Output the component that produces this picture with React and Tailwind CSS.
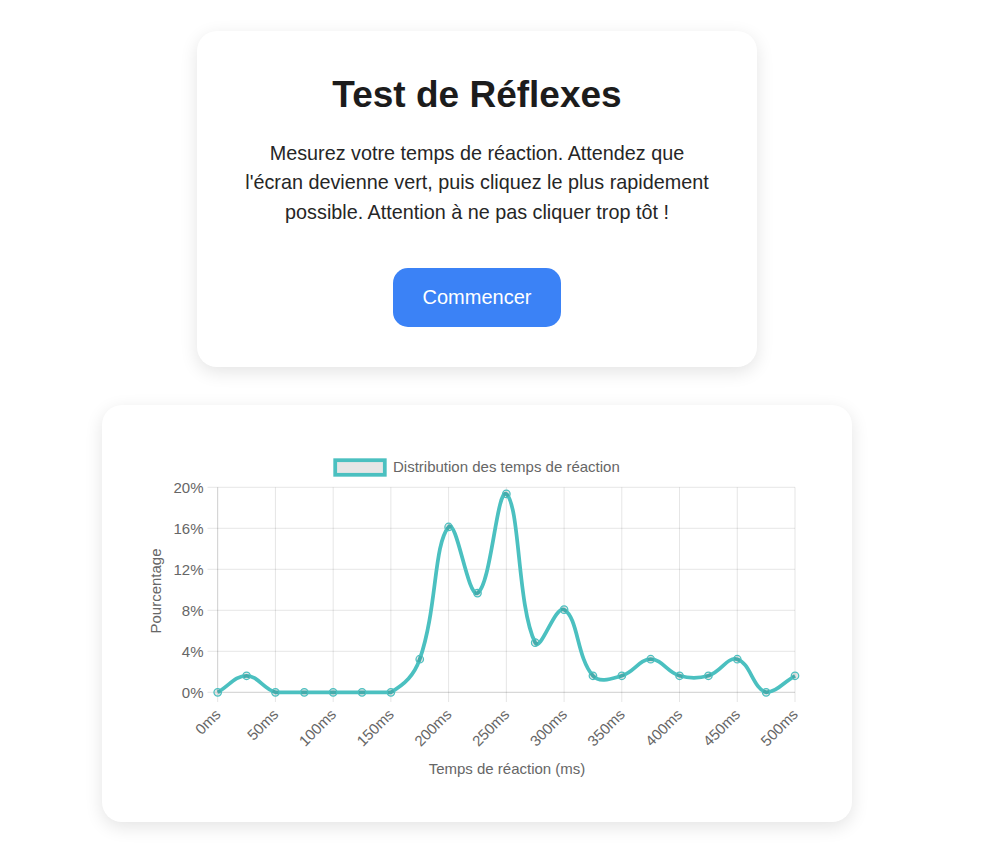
import React from 'react'

const counts = [0, 1, 0, 0, 0, 0, 0, 2, 10, 6, 12, 3, 5, 1, 1, 2, 1, 1, 2, 0, 1]
const total = 62

const area = { left: 217.7, right: 795, top: 487.3, bottom: 692.3 }
const stepX = (area.right - area.left) / 20
const pxPerPct = (area.bottom - area.top) / 20

const pts = counts.map((c, i) => ({
  x: area.left + i * stepX,
  y: area.bottom - (c / total) * 100 * pxPerPct,
}))

const clamp = (v, lo, hi) => Math.min(Math.max(v, lo), hi)

// same control points as chart.js splineCurve, tension 0.4
function buildPath(points, t) {
  const cps = points.map((cur, i) => {
    const prev = points[i - 1] || cur
    const next = points[i + 1] || cur
    const d01 = Math.hypot(cur.x - prev.x, cur.y - prev.y)
    const d12 = Math.hypot(next.x - cur.x, next.y - cur.y)
    let s01 = d01 / (d01 + d12)
    let s12 = d12 / (d01 + d12)
    s01 = isNaN(s01) ? 0 : s01
    s12 = isNaN(s12) ? 0 : s12
    const fa = t * s01
    const fb = t * s12
    const cap = (p) => ({ x: clamp(p.x, area.left, area.right), y: clamp(p.y, area.top, area.bottom) })
    return {
      a: cap({ x: cur.x - fa * (next.x - prev.x), y: cur.y - fa * (next.y - prev.y) }),
      b: cap({ x: cur.x + fb * (next.x - prev.x), y: cur.y + fb * (next.y - prev.y) }),
    }
  })
  let d = `M${points[0].x},${points[0].y}`
  for (let i = 1; i < points.length; i++) {
    const c1 = cps[i - 1].b
    const c2 = cps[i].a
    d += ` C${c1.x},${c1.y} ${c2.x},${c2.y} ${points[i].x},${points[i].y}`
  }
  return d
}

const yTicks = [0, 4, 8, 12, 16, 20]
const xLabels = Array.from({ length: 11 }, (_, i) => i * 50)

function ReactionChart() {
  const grid = 'rgba(0,0,0,0.1)'
  const font = { fontFamily: '"Liberation Sans", Arial, sans-serif', fontSize: 15, fill: '#666' }
  return (
    <svg width="700" height="367" viewBox="127 430 700 367" className="block">
      {/* legend */}
      <rect x="335.2" y="460.2" width="49.6" height="14.6" fill="#e6e6e6" stroke="#4bc0c0" strokeWidth="3.75" />
      <text x="393" y="472" {...font}>Distribution des temps de réaction</text>

      {/* horizontal grid */}
      {yTicks.map((v) => {
        const y = area.bottom - v * pxPerPct
        return (
          <g key={v}>
            <line x1="207.5" x2={area.right} y1={y} y2={y} stroke={grid} strokeWidth="1" />
            <text x="203.5" y={y} textAnchor="end" dominantBaseline="central" {...font}>{v}%</text>
          </g>
        )
      })}

      {/* vertical grid */}
      {xLabels.map((v, i) => {
        const x = area.left + i * 2 * stepX
        return (
          <g key={v}>
            <line x1={x} x2={x} y1={area.top} y2="702" stroke={grid} strokeWidth="1" />
            <text
              transform={`translate(${x},711.5) rotate(-45)`}
              textAnchor="end"
              dominantBaseline="central"
              {...font}
            >
              {v}ms
            </text>
          </g>
        )
      })}

      {/* axis borders */}
      <line x1={area.left} x2={area.right} y1={area.bottom} y2={area.bottom} stroke={grid} strokeWidth="1" />
      <line x1={area.left} x2={area.left} y1={area.top} y2={area.bottom} stroke={grid} strokeWidth="1" />

      {/* axis titles */}
      <text
        transform="translate(155.5,591) rotate(-90)"
        textAnchor="middle"
        dominantBaseline="central"
        {...font}
      >
        Pourcentage
      </text>
      <text x="507" y="773.5" textAnchor="middle" {...font}>Temps de réaction (ms)</text>

      {/* data */}
      <path d={buildPath(pts, 0.4)} fill="none" stroke="#4bc0c0" strokeWidth="3.75" strokeLinejoin="round" />
      {pts.map((p, i) => (
        <circle key={i} cx={p.x} cy={p.y} r="3.75" fill="rgba(0,0,0,0.1)" stroke="#4bc0c0" strokeWidth="1.25" />
      ))}
    </svg>
  )
}

export default function App() {
  return (
    <div className="min-h-screen bg-white font-['Liberation_Sans',Arial,sans-serif]">
      <div className="w-[954px] flex flex-col items-center pt-[31px] pb-[40px] gap-[38px]">
        {/* Intro card */}
        <div className="w-[560px] bg-white rounded-[20px] shadow-[0_5px_18px_rgba(0,0,0,0.11)] pt-[43px] pb-[40px] flex flex-col items-center">
          <h1 className="text-[37px] leading-[42.5px] font-bold text-[#1c1c1c]">Test de Réflexes</h1>
          <p className="mt-[22px] w-[474px] text-center text-[19.8px] leading-[29.7px] text-[#262626]">
            Mesurez votre temps de réaction. Attendez que l'écran devienne vert, puis cliquez le plus rapidement possible. Attention à ne pas cliquer trop tôt !
          </p>
          <button className="mt-[40px] h-[59px] px-[30px] rounded-[15px] bg-[#3b82f6] text-white text-[20px]">
            Commencer
          </button>
        </div>

        {/* Chart card */}
        <div className="w-[750px] h-[417px] bg-white rounded-[20px] shadow-[0_5px_18px_rgba(0,0,0,0.11)] px-[25px] pt-[25px]">
          <ReactionChart />
        </div>
      </div>
    </div>
  )
}
